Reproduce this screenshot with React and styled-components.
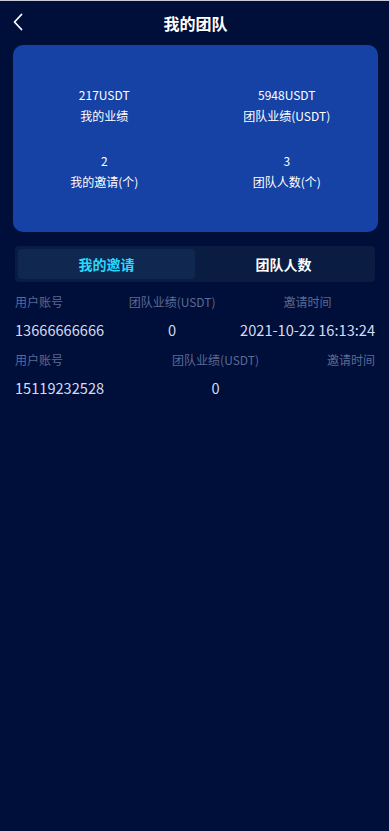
import styled, { createGlobalStyle } from "styled-components";

const GlobalStyle = createGlobalStyle`
  html, body {
    margin: 0;
    padding: 0;
    background: #000f3a;
  }
  body {
    font-family: "Noto Sans CJK SC", "Noto Sans", sans-serif;
    color: #ffffff;
  }
  * {
    box-sizing: border-box;
  }
`;

const Page = styled.div`
  min-height: 831px;
  background: #000f3a;
  border-top: 1px solid #c9ccd6;
  display: flex;
  flex-direction: column;
`;

const Header = styled.header`
  height: 44px;
  display: flex;
  align-items: center;
  justify-content: center;
  position: relative;
`;

const BackButton = styled.button`
  position: absolute;
  left: 6px;
  top: 9px;
  width: 24px;
  height: 24px;
  padding: 0;
  border: none;
  background: none;
  display: flex;
  align-items: center;
  justify-content: center;
`;

const Title = styled.h1`
  margin: 0;
  font-size: 16px;
  font-weight: 700;
  color: #ffffff;
  margin-left: 2px;
`;

const Summary = styled.section`
  margin: 0 11px 0 13px;
  height: 187px;
  background: #1642a6;
  border-radius: 10px;
  display: grid;
  grid-template-columns: 1fr 1fr;
  align-content: center;
  row-gap: 27px;
  padding: 0 0 1px 0;
`;

const Stat = styled.div`
  display: flex;
  flex-direction: column;
  align-items: center;
  gap: 3px;
  font-size: 12px;
  line-height: 18px;
  color: #ffffff;
`;

const Tabs = styled.div`
  margin: 14px 14px 0 15px;
  height: 36px;
  background: #0a1c42;
  border-radius: 4px;
  padding: 3px;
  display: flex;
`;

const Tab = styled.div`
  flex: 1;
  display: flex;
  align-items: center;
  justify-content: center;
  border-radius: 4px;
  font-size: 14px;
  font-weight: 700;
  color: ${(p) => (p.$active ? "#27d9ff" : "#ffffff")};
  background: ${(p) => (p.$active ? "#10284f" : "transparent")};
`;

const List = styled.div`
  margin: 11px 14px 0 15px;
  display: flex;
  flex-direction: column;
  gap: 11px;
`;

const Record = styled.div`
  display: flex;
  justify-content: space-between;
`;

const Column = styled.div`
  display: flex;
  flex-direction: column;
  align-items: ${(p) => p.$align || "center"};
  gap: 9px;
`;

const Label = styled.span`
  font-size: 12px;
  line-height: 18px;
  color: #5a6a94;
  white-space: nowrap;
`;

const Value = styled.span`
  font-size: 14.6px;
  line-height: 20px;
  color: #d5dcf2;
  white-space: nowrap;
  min-height: 20px;
`;

const stats = [
  { value: "217USDT", label: "我的业绩" },
  { value: "5948USDT", label: "团队业绩(USDT)" },
  { value: "2", label: "我的邀请(个)" },
  { value: "3", label: "团队人数(个)" },
];

const records = [
  { account: "13666666666", amount: "0", time: "2021-10-22 16:13:24" },
  { account: "15119232528", amount: "0", time: "" },
];

export default function App() {
  return (
    <>
      <GlobalStyle />
      <Page>
        <Header>
          <BackButton aria-label="返回">
            <svg width="12" height="18" viewBox="0 0 12 18" fill="none">
              <path d="M9.5 1.5 L2.5 9 L9.5 16.5" stroke="#ffffff" strokeWidth="1.8" strokeLinecap="round" strokeLinejoin="round" />
            </svg>
          </BackButton>
          <Title>我的团队</Title>
        </Header>
        <Summary>
          {stats.map((s) => (
            <Stat key={s.label}>
              <span>{s.value}</span>
              <span>{s.label}</span>
            </Stat>
          ))}
        </Summary>
        <Tabs>
          <Tab $active>我的邀请</Tab>
          <Tab>团队人数</Tab>
        </Tabs>
        <List>
          {records.map((r) => (
            <Record key={r.account}>
              <Column $align="flex-start">
                <Label>用户账号</Label>
                <Value>{r.account}</Value>
              </Column>
              <Column>
                <Label>团队业绩(USDT)</Label>
                <Value>{r.amount}</Value>
              </Column>
              <Column>
                <Label>邀请时间</Label>
                <Value>{r.time}</Value>
              </Column>
            </Record>
          ))}
        </List>
      </Page>
    </>
  );
}
